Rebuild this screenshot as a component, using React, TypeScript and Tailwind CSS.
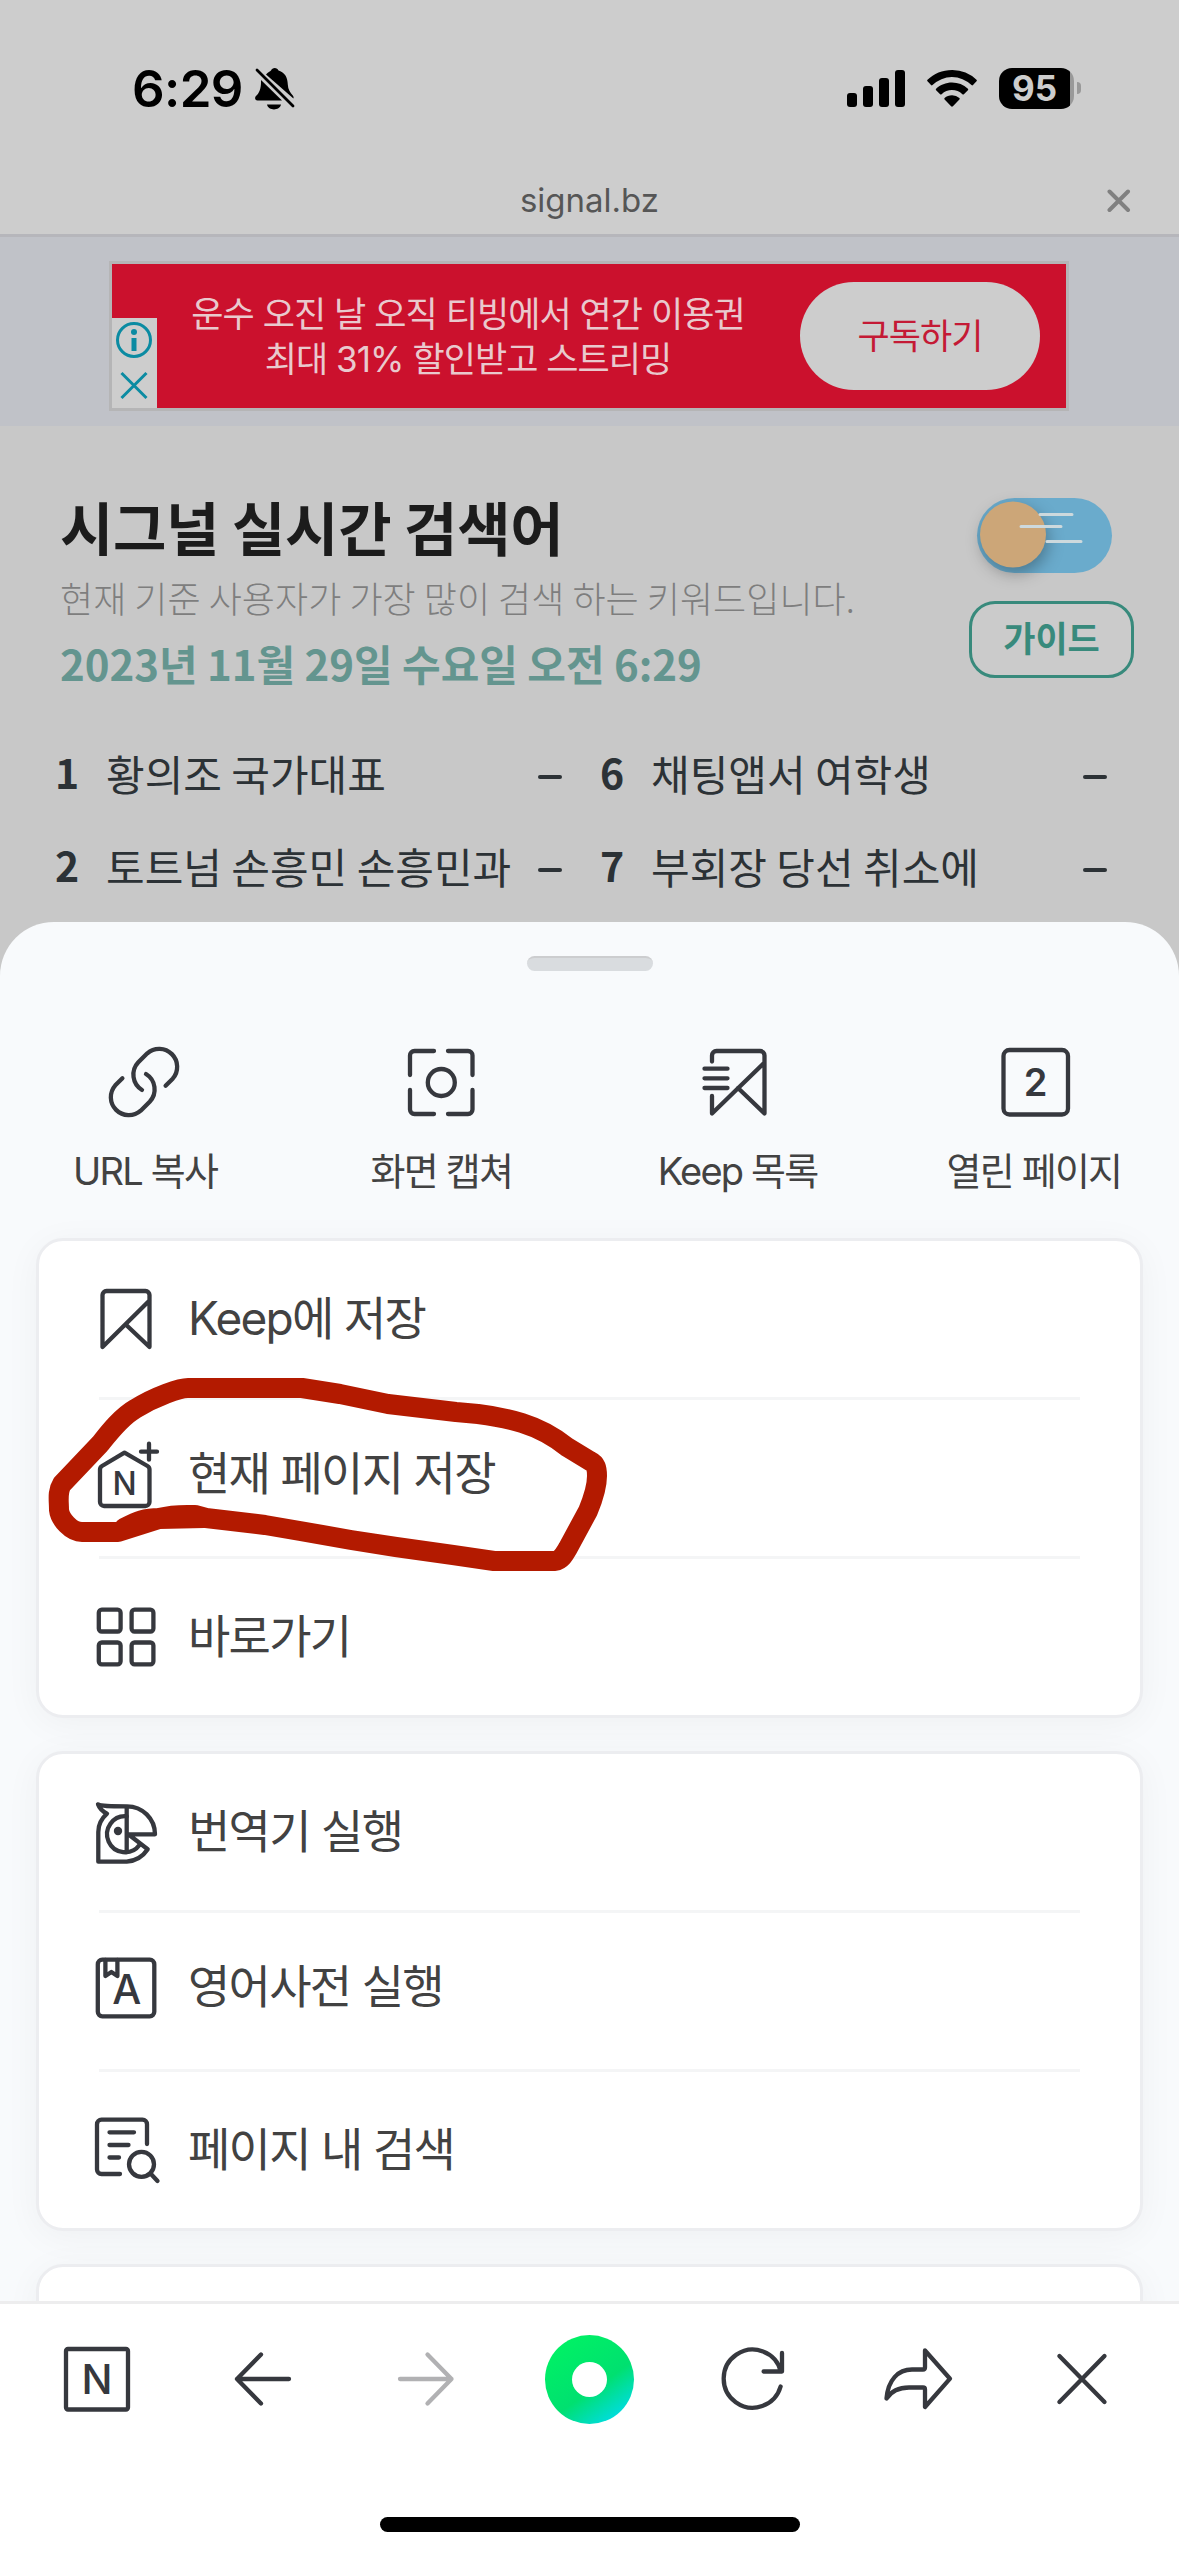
import React from 'react';

type IconProps = { children: React.ReactNode; size?: number; className?: string };

// Line icon drawn on an 84 (toolbar) or 80 (menu row) grid
const LineIcon: React.FC<IconProps> = ({ children, size = 84, className = 'text-[#36383e]' }) => (
    <svg
        width={size}
        height={size}
        viewBox={`0 0 ${size} ${size}`}
        fill="none"
        stroke="currentColor"
        strokeWidth={4.3}
        strokeLinecap="round"
        strokeLinejoin="round"
        className={`shrink-0 ${className}`}
    >
        {children}
    </svg>
);

type LetterProps = { x: number; y: number; size: number; children: string; weight?: number };

const Letter: React.FC<LetterProps> = ({ x, y, size, children, weight = 500 }) => (
    <text x={x} y={y} fontSize={size} fontWeight={weight} textAnchor="middle" fill="currentColor" stroke="none">
        {children}
    </text>
);

const shortcuts = [
    {
        label: 'URL 복사',
        icon: (
            <LineIcon>
                <path d="M62.6 45.8 69.7 38.7A18 18 0 0 0 44.3 13.3L35.3 22.3A18 18 0 0 0 39 50" />
                <path d="M19.4 38.2 12.3 45.3A18 18 0 0 0 37.7 70.7L46.7 61.7A18 18 0 0 0 43 34" />
            </LineIcon>
        ),
    },
    {
        label: '화면 캡쳐',
        icon: (
            <LineIcon>
                <path d="M35 11H15.5a4.5 4.5 0 0 0-4.5 4.5V35M49 11h20a4.5 4.5 0 0 1 4.5 4.5V35M73.5 50v19.5a4.5 4.5 0 0 1-4.5 4.5H49M35 74H15.5a4.5 4.5 0 0 1-4.5-4.5V50" />
                <circle cx="42.3" cy="42.5" r="13.5" />
            </LineIcon>
        ),
    },
    {
        label: 'Keep 목록',
        icon: (
            <LineIcon>
                <path d="M16 21.5V15.500a4.500 4.500 0 0 1 4.500-4.500H64a4.500 4.500 0 0 1 4.500 4.500V73.500L42 48M16 56v17.500L68 23M8.500 28.700h23M8.500 38.300h23M8.500 48h23" />
            </LineIcon>
        ),
    },
    {
        label: '열린 페이지',
        icon: (
            <LineIcon>
                <rect x="11.5" y="10" width="64.5" height="64.5" rx="6" />
                <Letter x={43.5} y={56} size={38} weight={600}>2</Letter>
            </LineIcon>
        ),
    },
];

const saveMenu = [
    {
        label: 'Keep에 저장',
        icon: (
            <LineIcon size={80}>
                <path d="M15.5 68V16a4 4 0 0 1 4-4h39a4 4 0 0 1 4 4v52L39 45.700M15.500 68 62.500 21.500" />
            </LineIcon>
        ),
    },
    {
        label: '현재 페이지 저장',
        icon: (
            <LineIcon size={80}>
                <path d="M37.5 18.7 60.5 32a4 4 0 0 1 2 3.500V68a4 4 0 0 1-4 4H17a4 4 0 0 1-4-4V35.500a4 4 0 0 1 2-3.500ZM62 9.700v16M54 17.700h16" />
                <Letter x={37.7} y={61} size={32}>N</Letter>
            </LineIcon>
        ),
    },
    {
        label: '바로가기',
        icon: (
            <LineIcon size={80}>
                <rect x="11.8" y="12.7" width="21.8" height="21.8" rx="3" />
                <rect x="44.6" y="12.7" width="21.8" height="21.8" rx="3" />
                <rect x="11.8" y="45.5" width="21.8" height="21.8" rx="3" />
                <rect x="44.6" y="45.5" width="21.8" height="21.8" rx="3" />
            </LineIcon>
        ),
    },
];

const toolMenu = [
    {
        label: '번역기 실행',
        icon: (
            <LineIcon size={80}>
                <path d="M11 12.3C14 14.3 22 14.3 39.7 14.3A28 28 0 0 1 68 42.3H41.3L60.7 57.3A28 28 0 0 1 39.7 69.7H11.3V40C11.3 32 14 27 20 21.7 14.5 19 12.5 16.5 11 12.3ZM39.7 14.3V60" />
                <path d="M39.7 24.3A18 18 0 1 0 52.5 53" />
                <circle cx="31" cy="39" r="4.2" fill="currentColor" stroke="none" />
            </LineIcon>
        ),
    },
    {
        label: '영어사전 실행',
        icon: (
            <LineIcon size={80}>
                <rect x="10.8" y="12.7" width="56.5" height="56.6" rx="4.5" />
                <path d="M18.4 13v16l6-4 6 4V13" />
                <Letter x={39.8} y={57} size={41}>A</Letter>
            </LineIcon>
        ),
    },
    {
        label: '페이지 내 검색',
        icon: (
            <LineIcon size={80}>
                <path d="M33 64H14.5a4.5 4.5 0 0 1-4.5-4.5V14.2a4.5 4.5 0 0 1 4.5-4.5h41a4.5 4.5 0 0 1 4.5 4.5V34M22.5 22.3H47M22.5 35h19M22.5 47.5H32" />
                <circle cx="54.5" cy="54.3" r="12.5" />
                <path d="M63.5 63.5l7 7.5" />
            </LineIcon>
        ),
    },
];

const keywords = [
    { rank: 1, name: '황의조 국가대표' },
    { rank: 6, name: '채팅앱서 여학생' },
    { rank: 2, name: '토트넘 손흥민 손흥민과' },
    { rank: 7, name: '부회장 당선 취소에' },
];

const StatusBar: React.FC = () => (
    <div className="h-44 pl-[132px] pr-[98px] flex items-center justify-between text-black">
        <div className="flex items-center gap-[11px]">
            <span className="text-[51px] leading-none font-semibold tracking-[-0.6px]">6:29</span>
            <svg width="42" height="44" viewBox="0 0 42 44" fill="currentColor">
                <path d="M12 8.5C14 6 16 5.5 17 4.5c1-3.5 6.5-3.5 7.5 0 7 2.5 9 7 9.3 14 .2 5 2.4 8 5 11 .8 1 1 2 .6 3ZM7 14 28 34.500H3.500c-3 0-3-3.500-1-5C5.500 26.500 7.300 22 7 14ZM13 38.500h14c-1.500 6.500-12.500 6.500-14 0Z" />
                <path d="M3 4 39 40" stroke="currentColor" strokeWidth="2.8" strokeLinecap="round" />
            </svg>
        </div>
        <div className="flex items-center">
            <div className="flex items-end gap-1.5">
                <div className="w-2.5 h-3.5 rounded-[3px] bg-black" />
                <div className="w-2.5 h-[21px] rounded-[3px] bg-black" />
                <div className="w-2.5 h-[29px] rounded-[3px] bg-black" />
                <div className="w-2.5 h-[37px] rounded-[3px] bg-black" />
            </div>
            <svg width="50" height="37" viewBox="0 0 50 37" className="ml-[22px]" fill="currentColor">
                <path d="M25 0C15.5 0 6.8 3.7.5 9.8c-.5.5-.5 1 0 1.5L4 15c.5.5 1 .5 1.5 0A28 28 0 0 1 44.5 15c.5.5 1 .5 1.5 0l3.5-3.7c.5-.5.5-1 0-1.5A35 35 0 0 0 25 0Z" />
                <path d="M25 12.5c-6 0-11.7 2.3-15.9 6.2-.5.5-.5 1 0 1.5l4 4c.5.5 1 .5 1.5 0a15.3 15.3 0 0 1 20.8 0c.5.5 1 .5 1.5 0l4-4c.5-.5.5-1 0-1.5A23.4 23.4 0 0 0 25 12.5Z" />
                <path d="M25 25.3c-2.8 0-5.4 1-7.4 2.7-.5.5-.5 1 0 1.5l6.5 6.8c.6.6 1.2.6 1.8 0l6.5-6.8c.5-.5.5-1 0-1.5a11.3 11.3 0 0 0-7.4-2.7Z" />
            </svg>
            <div className="ml-[22px] w-[75px] h-[41px] rounded-[13px] bg-[linear-gradient(90deg,#000_71px,#999_71px)] flex items-center justify-center pr-1">
                <span className="text-[#cdcdcd] text-[35px] leading-none font-bold">95</span>
            </div>
            <div className="ml-[3px] w-1 h-3 rounded-r-full bg-[#999999]" />
        </div>
    </div>
);

const AdBanner: React.FC = () => (
    <div className="h-[189px] pt-6 bg-[#c0c2c8] flex justify-center items-start">
        <div className="w-[960px] h-[150px] -ml-px border-[3px] border-[#b5b5b6] bg-[#cb112d] flex">
            <div className="w-[45px] h-[90px] mt-[54px] bg-[#cdcdcd]">
                <svg width="45" height="90" viewBox="0 0 45 90" fill="none" stroke="#0b8ba2" strokeWidth="3">
                    <circle cx="22" cy="22" r="16.5" />
                    <path d="M22 20v13" strokeWidth="5" />
                    <circle cx="22" cy="14" r="3" fill="#0b8ba2" stroke="none" />
                    <path d="M9.5 55 34.5 80M34.5 55 9.5 80" />
                </svg>
            </div>
            <div className="w-[622px] pt-7 text-center text-[#e9c9cd] text-[35px] leading-[45px] tracking-[-0.95px]">
                <p>운수 오진 날 오직 티빙에서 연간 이용권</p>
                <p>최대 31% 할인받고 스트리밍</p>
            </div>
            <button className="ml-[21px] mt-[18px] w-60 h-[108px] rounded-full bg-[#cdcdcd] text-[#c41a35] text-[35px] leading-none tracking-[-1px]">
                구독하기
            </button>
        </div>
    </div>
);

const WindToggle: React.FC = () => (
    <svg width="150" height="96" viewBox="0 0 150 96" className="overflow-visible">
        <rect x="8" y="0" width="135" height="75" rx="37.5" fill="#6aabcc" />
        <circle cx="44" cy="36.5" r="33" fill="#cca678" className="drop-shadow-[2px_6px_8px_rgba(0,0,0,0.3)]" />
        <path d="M71 16.5h32M52 28.5h40M78 43.5h34" stroke="#cdd9dd" strokeWidth="3" strokeLinecap="round" />
    </svg>
);

const SignalPage: React.FC = () => (
    <div className="h-[496px] bg-[#c8c8c8] font-['Noto_Sans_CJK_KR',sans-serif]">
        <div className="flex justify-between pl-[60px] pr-[45px] h-[300px]">
            <div className="pt-[62px]">
                <h1 className="text-[58px] leading-[76px] font-bold text-[#1c1c1c] tracking-[-0.3px]">시그널 실시간 검색어</h1>
                <p className="mt-[11px] text-[36px] leading-[44px] font-light text-[#7e7e7e] tracking-[0.05px] whitespace-nowrap">현재 기준 사용자가 가장 많이 검색 하는 키워드입니다.</p>
                <p className="mt-[18px] text-[42px] leading-[52px] font-bold text-[#64958f] tracking-[-0.05px] whitespace-nowrap">2023년 11월 29일 수요일 오전 6:29</p>
            </div>
            <div className="pt-[72px] flex flex-col items-end">
                <div className="w-[165px] h-[103px]"><WindToggle /></div>
                <button className="w-[165px] h-[77px] rounded-[26px] border-[3px] border-[#388a7c] bg-[#cbcbcb] text-[#388a7c] text-[35px] leading-none pb-1.5 font-bold">
                    가이드
                </button>
            </div>
        </div>
        <div className="grid grid-cols-[545px_545px] pl-[55px]">
            {keywords.map((k) => (
                <div key={k.rank} className="h-[93px] flex items-center text-[#2c3236] pr-[38px]">
                    <span className="w-[51px] pb-0.5 text-[41px] leading-none font-bold">{k.rank}</span>
                    <span className="flex-1 text-[42px] leading-none whitespace-nowrap">{k.name}</span>
                    <span className="w-6 h-1 mt-2 rounded-sm bg-[#2c3236]" />
                </div>
            ))}
        </div>
    </div>
);

type MenuItem = { label: string; icon: React.ReactNode };

const MenuCard: React.FC<{ items: MenuItem[] }> = ({ items }) => (
    <div className="mx-9 h-[480px] shrink-0 border-[3px] border-[#ecedf0] rounded-[27px] bg-white shadow-[0_6px_36px_rgba(0,0,0,0.045)]">
        {items.map((item, i) => (
            <div key={item.label}>
                {i > 0 && <div className="h-[3px] mx-[60px] bg-[#f4f5f6]" />}
                <div className={`h-[156px] pl-12 flex items-center gap-[21px] ${i === 1 ? 'pb-2' : ''}`}>
                    {item.icon}
                    <span className="pb-[3px] text-[46px] leading-none tracking-[-1.7px] text-[#424242]">{item.label}</span>
                </div>
            </div>
        ))}
    </div>
);

// Hand-drawn ring around the "save current page" row
const MarkerRing: React.FC = () => (
    <svg className="absolute left-[40px] top-[1370px]" width="580" height="210" viewBox="40 1370 580 210" fill="none" stroke="#b31a00" strokeWidth="20" strokeLinecap="round" strokeLinejoin="round">
        <path d="M124 1528C138 1521 145 1518 159 1518C175 1514 185 1515 195 1515L206 1518L265 1525L300 1531L351 1540L396 1547L453 1555L494 1561H555C561 1560 564 1555 568 1548L588 1511C593 1499 597 1486 597 1476C597 1468 596 1464 590 1461L567 1447C552 1435 538 1428 522 1423C506 1418 494 1416 478 1414L456 1412L388 1404L340 1394L302 1388L265 1388H188C180 1388 156 1396 135 1409C121 1417 108 1434 100 1444L62 1484C57 1492 59 1500 59 1510C60 1519 71 1532 82 1532H118L159 1519L204 1518" />
    </svg>
);

const NavBar: React.FC = () => (
    <div className="h-[255px] shrink-0 border-t-[3px] border-[#ededee] bg-white">
        <div className="h-[150px] px-[15px] grid grid-cols-7 items-center justify-items-center">
            <LineIcon>
                <rect x="11" y="12" width="62" height="60.5" rx="2" />
                <Letter x={42} y={57} size={41}>N</Letter>
            </LineIcon>
            <LineIcon>
                <path d="M42 17.5 18 42l24 24.5M18 42h52" />
            </LineIcon>
            <LineIcon className="text-[#b1b1b3]">
                <path d="M44.5 17.5 68.5 42l-24 24.5M68.5 42H17" />
            </LineIcon>
            <div className="w-[89px] h-[89px] rounded-full bg-[linear-gradient(145deg,#00f264_10%,#00e070_58%,#00dcf0_92%)] flex items-center justify-center">
                <div className="w-[35px] h-[35px] rounded-full bg-white" />
            </div>
            <LineIcon>
                <path d="M68.6 49.5A29 29 0 1 1 68.8 34.5M70 16v18.5H51.6" />
            </LineIcon>
            <LineIcon>
                <path d="M49 13.5 74 41.7 49 70V52.5q0-2-2-2H33C24 50.5 16 53 10.5 61.5 12 43 22 32.5 36 32.5H47q2 0 2-2Z" />
            </LineIcon>
            <LineIcon>
                <path d="M19.4 19 64.5 65M64.5 19 19.4 65" />
            </LineIcon>
        </div>
        <div className="mt-[63px] mx-auto w-[420px] h-[15px] rounded-full bg-black" />
    </div>
);

export default function App() {
    return (
        <div className="relative w-[1179px] h-[2556px] overflow-hidden flex flex-col bg-[#c8c8c8] font-[Inter,'Noto_Sans_CJK_KR',sans-serif]">
            <header className="h-[237px] shrink-0 bg-[#cdcdcd] border-b-[3px] border-[#b6b6bb]">
                <StatusBar />
                <div className="h-[58px] pb-2.5 grid grid-cols-3 items-center">
                    <span className="col-start-2 text-center text-[33px] leading-none text-[#565656]">signal.bz</span>
                    <svg width="24" height="24" viewBox="0 0 24 24" className="justify-self-end mr-12 mt-0.5" stroke="#808080" strokeWidth="4" strokeLinecap="round">
                        <path d="M2.5 2.5 21 21M21 2.5 2.5 21" />
                    </svg>
                </div>
            </header>
            <AdBanner />
            <SignalPage />

            {/* Bottom sheet */}
            <main className="h-[1379px] shrink-0 flex flex-col overflow-hidden rounded-t-[54px] bg-[#f8fafc]">
                <div className="mt-[34px] mx-auto w-[126px] h-[15px] shrink-0 rounded-full bg-[#d9dcdf] border-t-2 border-[#cccdcf]" />
                <div className="-mx-[3px] mt-[69px] h-[198px] shrink-0 grid grid-cols-4">
                    {shortcuts.map((s) => (
                        <div key={s.label} className="flex flex-col items-center">
                            {s.icon}
                            <span className="mt-[27px] text-[38px] leading-[40px] tracking-[-1.8px] text-[#424242]">{s.label}</span>
                        </div>
                    ))}
                </div>
                <div className="flex flex-col gap-[33px]">
                    <MenuCard items={saveMenu} />
                    <MenuCard items={toolMenu} />
                    <MenuCard items={[]} />
                </div>
            </main>
            <NavBar />
            <MarkerRing />
        </div>
    );
}
